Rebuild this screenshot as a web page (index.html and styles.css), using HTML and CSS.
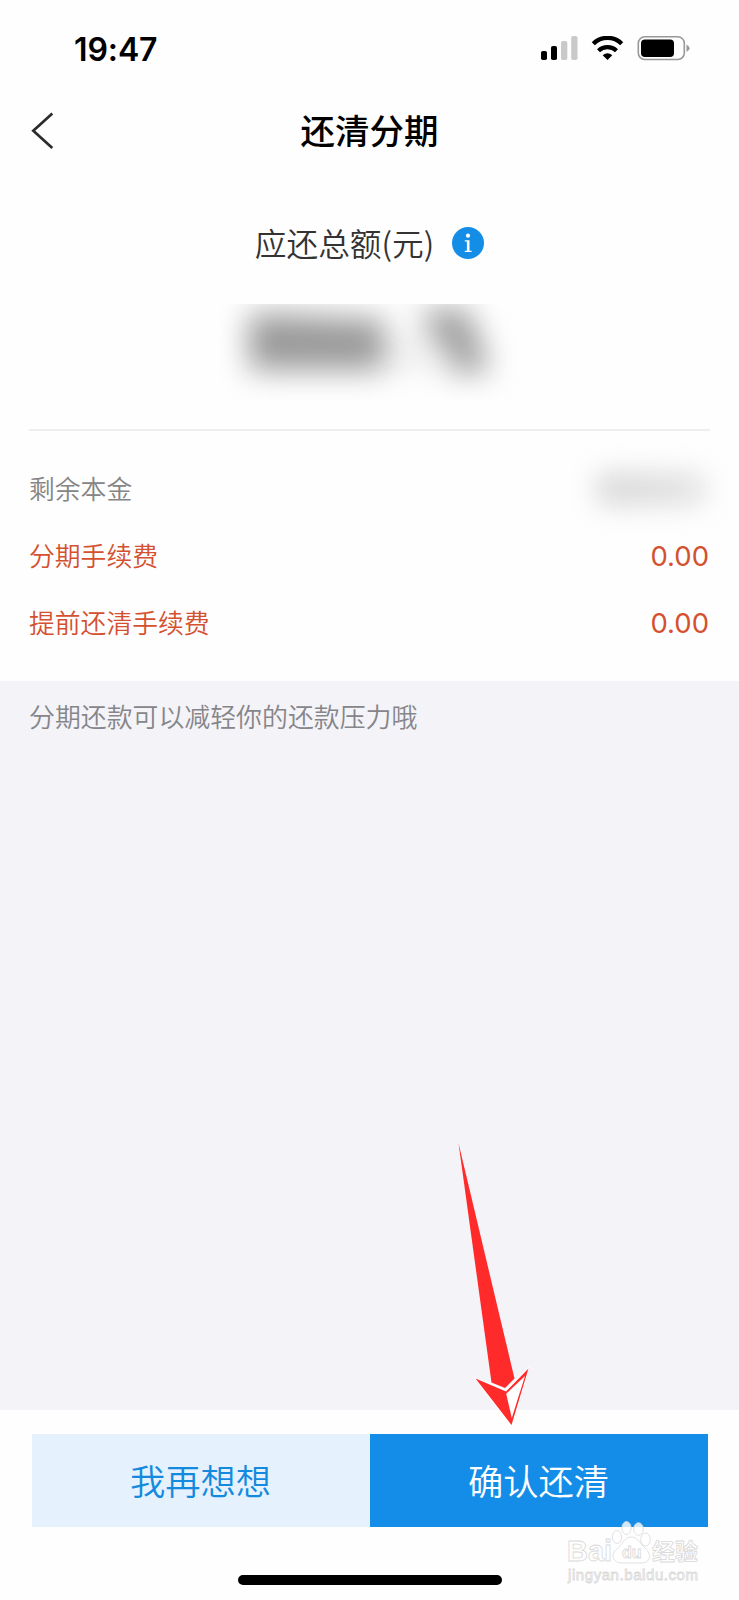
FILE: index.html
```html
<!DOCTYPE html>
<html lang="zh-CN">
<head>
<meta charset="utf-8">
<title>还清分期</title>
<link rel="stylesheet" href="styles.css">
</head>
<body>
<div class="screen">
  <header class="status">
    <span class="time">19:47</span>
    <svg class="status-icons" width="150" height="26" viewBox="0 0 150 26">
      <rect x="0" y="15" width="6" height="9" rx="1.8"/>
      <rect x="10" y="10" width="6" height="14" rx="1.8"/>
      <rect x="20" y="5" width="6.3" height="19" rx="1.8" fill="#c9c9c9"/>
      <rect x="30.2" y="0" width="6.3" height="24" rx="1.8" fill="#c9c9c9"/>
      <g fill="none" stroke="#000">
        <path d="M52.3 7.7A20.3 20.3 0 0 1 80.7 7.7" stroke-width="4.4"/>
        <path d="M57.5 14.7A13 13 0 0 1 75.5 14.7" stroke-width="4.2"/>
      </g>
      <path d="M61.7 19.2Q66.5 15.3 71.3 19.2L66.5 24Z"/>
      <rect x="97.3" y="0.8" width="46" height="22.7" rx="6.5" fill="none" stroke="#989898" stroke-width="1.6"/>
      <rect x="100" y="3.5" width="33" height="17.5" rx="4"/>
      <path d="M145.5 8.5Q148.5 10 148.5 12.2Q148.5 14.5 145.5 16Z" fill="#989898"/>
    </svg>
  </header>
  <nav class="nav">
    <svg class="back" width="24" height="38" viewBox="0 0 24 38"><path d="M22.3 1.5L3.3 18.8L22.3 36" fill="none" stroke="#2b2b2b" stroke-width="2.7"/></svg>
    <h1 class="title">还清分期</h1>
  </nav>
  <section class="total">
    <div class="total-label">
      <span class="total-text">应还总额(元)</span>
      <svg class="info" width="32" height="32" viewBox="0 0 32 32">
        <circle cx="16" cy="16" r="16" fill="#148de6"/>
        <circle cx="16" cy="8.7" r="2.1" fill="#fff"/>
        <path d="M12.8 13.2H17.5V23.7H19.6V25H12.8V23.7H14.9V14.5H12.8Z" fill="#fff"/>
      </svg>
    </div>
    <div class="masked-amount">
      <svg width="300" height="97" viewBox="0 0 300 97">
        <defs><filter id="soft" x="-40%" y="-100%" width="180%" height="300%" color-interpolation-filters="sRGB"><feGaussianBlur stdDeviation="15"/></filter></defs>
        <g filter="url(#soft)" fill="#9a9a9a">
          <path d="M29 10H55L165 16V66H29Z"/>
          <path d="M200 6H248L270 68H230Z"/>
          <path d="M163 40H232V61H163Z" fill="#eaeaea"/>
        </g>
      </svg>
    </div>
  </section>
  <section class="details">
    <div class="row muted"><span class="label">剩余本金</span><span class="masked-value"></span></div>
    <div class="row"><span class="label">分期手续费</span><span class="value">0.00</span></div>
    <div class="row"><span class="label">提前还清手续费</span><span class="value">0.00</span></div>
  </section>
  <main class="note">分期还款可以减轻你的还款压力哦</main>
  <footer class="footer">
    <div class="actions">
      <button class="btn light">我再想想</button>
      <button class="btn primary">确认还清</button>
    </div>
    <div class="home"></div>
  </footer>
  <svg class="pointer" width="80" height="290" viewBox="0 0 80 290">
    <path d="M5.5 2L61.5 237.5L52 247L38.5 241.5Z" fill="#ff2b2b"/>
    <path d="M22.5 237.5L53 249L75 228L58.5 284Z" fill="#fff" stroke="#fff" stroke-width="2"/>
    <path d="M22.5 237.5L53 250.500L75.5 227.5L58.5 284Z" fill="#ff2b2b"/>
    <path d="M53.2 252.800L72 235L58.8 277Z" fill="#fff"/>
  </svg>
  <div class="watermark">
    <svg width="138" height="66" viewBox="0 0 138 66">
      <g fill="#fff" fill-opacity=".8" stroke="#d9d9d9" stroke-width=".8">
        <text class="wm-brand" x="2" y="41" textLength="45" lengthAdjust="spacingAndGlyphs">Bai</text>
        <ellipse cx="52" cy="17" rx="4.6" ry="6.5"/>
        <ellipse cx="61.5" cy="8" rx="4.6" ry="6.5"/>
        <ellipse cx="73.5" cy="9" rx="4.8" ry="6.3"/>
        <ellipse cx="80.5" cy="19.5" rx="4.8" ry="6.5"/>
        <path d="M66 17C59 17 57 25 52 29C45 34 48 43 57 43H76C86 43 87 34 80 28C75 24 73 17 66 17Z"/>
        <text class="wm-du" x="57" y="38">du</text>
        <text class="wm-cn" x="87" y="40">经验</text>
        <text class="wm-url" x="3" y="59.5" textLength="130">jingyan.baidu.com</text>
      </g>
    </svg>
  </div>
</div>
</body>
</html>
```
FILE: styles.css
```css
* { box-sizing: border-box; }
body { margin: 0; background: #fefefe; font-family: "Noto Sans CJK SC", sans-serif; }
.screen { position: relative; width: 739px; height: 1600px; display: flex; flex-direction: column; overflow: hidden; background: #fefefe; }
.status { height: 98px; padding: 0 48px 0 74px; display: flex; align-items: center; justify-content: space-between; }
.time { padding-top: 2px; font: 600 32px/40px Inter, sans-serif; color: #000; letter-spacing: -.1px; }
.status-icons { display: block; }
.nav { height: 66px; padding: 0 30px; display: grid; grid-template-columns: 60px 1fr 60px; align-items: center; }
.back { display: block; }
.title { margin: 0; padding-bottom: 5px; text-align: center; font-size: 34.5px; line-height: 48px; font-weight: 500; color: #000; }
.total { height: 267px; margin: 0 29px; padding-top: 54px; display: flex; flex-direction: column; align-items: center; border-bottom: 2px solid #eee; }
.total-label { height: 50px; display: flex; align-items: center; gap: 18px; font-size: 31.7px; line-height: 50px; font-weight: 350; color: #333; }
.total-text { padding-bottom: 2px; }
.info { display: block; }
.masked-amount { width: 300px; height: 97px; margin-top: 36px; overflow: hidden; }
.masked-amount svg { display: block; }
.details { height: 250px; padding: 24px 30px 0 29px; }
.row { height: 67px; display: flex; align-items: center; justify-content: space-between; font-size: 25.8px; font-weight: 350; color: #d4502f; }
.row.muted { color: #858585; }
.label { padding-bottom: 2px; }
.value { font-family: Inter, "Noto Sans CJK SC", sans-serif; font-size: 27.5px; font-weight: 400; }
.masked-value { width: 106px; height: 30px; margin-right: 5px; background: linear-gradient(90deg, #d2d2d2, #e0e0e0); filter: blur(14px); }
.note { height: 729px; padding: 16px 29px; background: #f3f3f8; font-size: 25.9px; line-height: 38px; font-weight: 350; color: #85858a; }
.footer { flex: 1; padding: 24px 31px 0; display: flex; flex-direction: column; align-items: center; background: #fefefe; }
.actions { width: 676px; height: 93px; display: grid; grid-template-columns: 1fr 1fr; }
.btn { border: 0; padding: 0 0 2px; font: 350 35.3px/50px "Noto Sans CJK SC", sans-serif; }
.light { background: #e5f2fe; color: #148ade; }
.primary { background: #148de9; color: #fff; }
.home { width: 264px; height: 10px; margin-top: 48px; border-radius: 5px; background: #000; }
.pointer { position: absolute; left: 453px; top: 1141px; }
.watermark { position: absolute; left: 565px; top: 1520px; }
.watermark svg { display: block; }
.wm-brand { font: 700 29px/1 "Liberation Sans", sans-serif; }
.wm-du { font: 700 16px "Liberation Sans", sans-serif; }
.wm-cn { font: 700 23px "Noto Sans CJK SC", sans-serif; }
.wm-url { font: 400 15px/1 "Liberation Sans", sans-serif; }
```
